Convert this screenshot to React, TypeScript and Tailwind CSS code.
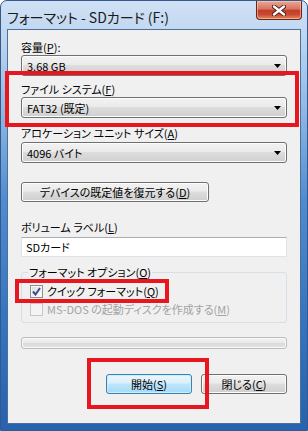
import React from 'react';

const btnFace =
  'bg-[linear-gradient(to_bottom,#f2f2f2_0%,#ebebeb_45%,#dddddd_50%,#cfcfcf_100%)] border border-[#707070] rounded-[3px] shadow-[inset_0_0_0_1px_#fcfcfc]';

function Combo({ value }: { value: string }) {
  return (
    <div className={`flex h-[21px] items-center justify-between pl-[5px] pr-[5px] ${btnFace}`}>
      <span className="leading-[14px]">{value}</span>
      <svg width="7" height="4" viewBox="0 0 7 4">
        <path d="M0 0h7L3.5 4z" fill="#000" />
      </svg>
    </div>
  );
}

function Label({ children, className = '' }: { children: React.ReactNode; className?: string }) {
  return <div className={`h-[14px] leading-[14px] ${className}`}>{children}</div>;
}

function CheckBox({ checked, disabled }: { checked?: boolean; disabled?: boolean }) {
  return (
    <span
      className={`flex h-[13px] w-[13px] shrink-0 items-center justify-center border ${
        disabled
          ? 'border-[#c7c7c7] bg-[#f4f4f4]'
          : 'border-[#8e8f8f] bg-[linear-gradient(135deg,#dcdcdc,#ffffff)] shadow-[inset_0_0_0_1px_#f4f4f4]'
      }`}
    >
      {checked && (
        <svg width="9" height="9" viewBox="0 0 9 9">
          <path d="M1 4.5 L3.5 7.5 L8 1" fill="none" stroke="#3a4d8f" strokeWidth="2" />
        </svg>
      )}
    </span>
  );
}

export default function App() {
  return (
    <div className="relative flex h-[431px] w-[308px] flex-col overflow-hidden rounded-t-[7px] border border-[#35598a] bg-[linear-gradient(to_bottom,#d0e1f5_0px,#bcd4f0_40px,#8db8e6_110px,#4f8bd0_200px,#3474c0_320px,#2662ad_431px)] font-['Noto_Sans_CJK_JP','Noto_Sans',sans-serif] text-[11px] text-black [font-feature-settings:'palt']">
      {/* title bar */}
      <div className="flex h-[28px] shrink-0 items-start justify-between">
        <span className="pl-[6px] pt-[8px] text-[14px] leading-[16px] text-[#1b1b1b]">
          フォーマット - SDカード (F:)
        </span>
        <div className="mr-[5px] flex h-[19px] w-[46px] items-center justify-center rounded-b-[4px] border border-t-0 border-[#6b2418] bg-[linear-gradient(to_bottom,#eaa896_0%,#d7735d_45%,#c23e2a_52%,#c84a31_75%,#e38a5f_100%)] shadow-[inset_0_0_0_1px_rgba(255,220,200,0.5)]">
          <svg width="14" height="11" viewBox="0 0 14 11">
            <path d="M2 1.5 L12 9.5 M12 1.5 L2 9.5" stroke="#4a1c14" strokeWidth="4.2" strokeLinecap="round" />
            <path d="M2 1.5 L12 9.5 M12 1.5 L2 9.5" stroke="#ffffff" strokeWidth="2.4" strokeLinecap="round" />
          </svg>
        </div>
      </div>

      {/* client area */}
      <div className="mx-[6px] mb-[6px] flex flex-1 flex-col border border-[#4f6f96] bg-[#f0f0f0] px-[13px] pt-[10px]">
        <Label>
          容量(<u>P</u>):
        </Label>
        <div className="mt-[1px]">
          <Combo value="3.68 GB" />
        </div>

        <Label className="mt-[6px]">
          ファイル システム(<u>F</u>)
        </Label>
        <div className="mt-[1px]">
          <Combo value="FAT32 (既定)" />
        </div>

        <Label className="mt-[8px]">
          アロケーション ユニット サイズ(<u>A</u>)
        </Label>
        <div className="mt-[2px]">
          <Combo value="4096 バイト" />
        </div>

        <div className="mt-[19px] w-[188px]">
          <div className={`flex h-[20px] items-center justify-center leading-[14px] ${btnFace}`}>
            デバイスの既定値を復元する(<u>D</u>)
          </div>
        </div>

        <Label className="mt-[18px]">
          ボリューム ラベル(<u>L</u>)
        </Label>
        <div className="mt-[3px] flex h-[20px] items-center border border-[#e2e3ea] border-t-[#abadb3] bg-white pl-[4px] leading-[14px]">
          SDカード
        </div>

        <fieldset className="mt-[8px] rounded-[3px] border border-[#d5dfe5] pb-[6px]">
          <legend className="ml-[6px] px-[1px] leading-[14px]">
            フォーマット オプション(<u>O</u>)
          </legend>
          <div className="ml-[8px] mt-[5px] flex h-[14px] items-center gap-[4px]">
            <CheckBox checked />
            <span className="leading-[14px]">
              クイック フォーマット(<u>Q</u>)
            </span>
          </div>
          <div className="ml-[8px] mt-[4px] flex h-[14px] items-center gap-[4px] text-[#a3a3a3]">
            <CheckBox disabled />
            <span className="leading-[14px]">
              MS-DOS の起動ディスクを作成する(<u>M</u>)
            </span>
          </div>
        </fieldset>

        <div className="mt-[14px] h-[12px] rounded-[3px] border border-[#bcbcbc] bg-[linear-gradient(to_bottom,#f4f4f4_0%,#e8e8e8_50%,#dadada_51%,#e4e4e4_100%)] shadow-[inset_0_0_0_1px_#f8f8f8]" />

        <div className="mt-[25px] flex justify-end gap-[9px]">
          <div className="flex h-[20px] w-[86px] items-center justify-center rounded-[3px] border border-[#3c7fb1] bg-[linear-gradient(to_bottom,#eaf6fd_0%,#d9f0fc_45%,#bee6fd_50%,#a7d9f5_100%)] leading-[14px] shadow-[inset_0_0_0_1px_#c9eefd]">
            開始(<u>S</u>)
          </div>
          <div className={`flex h-[20px] w-[86px] items-center justify-center leading-[14px] ${btnFace}`}>
            閉じる(<u>C</u>)
          </div>
        </div>
      </div>

      {/* red annotation boxes */}
      <div className="pointer-events-none absolute left-[4px] top-[70px] h-[56px] w-[294px] border-[4px] border-[#e8161e]" />
      <div className="pointer-events-none absolute left-[14px] top-[278px] h-[24px] w-[154px] border-[4px] border-[#e8161e]" />
      <div className="pointer-events-none absolute left-[86px] top-[357px] h-[51px] w-[122px] border-[4px] border-[#e8161e]" />
    </div>
  );
}
